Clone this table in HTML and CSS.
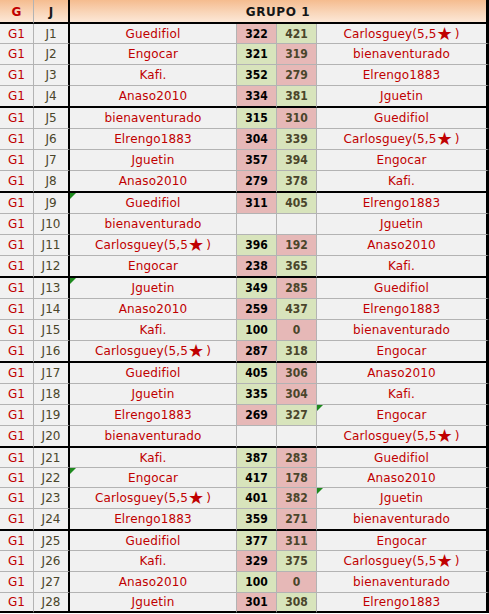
FILE: index.html
```html
<!DOCTYPE html>
<html>
<head>
<meta charset="utf-8">
<link rel="stylesheet" href="styles.css">
</head>
<body>
<div class="sheet">
  <div class="row head"><div class="c g">G</div><div class="c j">J</div><div class="c title">GRUPO 1</div></div>

  <div class="row s"><div class="c g">G1</div><div class="c j">J1</div><div class="c name">Guedifiol</div><div class="c sc lose">322</div><div class="c sc win">421</div><div class="c name away">Carlosguey(5,5<span class="star">★</span>)</div></div>
  <div class="row"><div class="c g">G1</div><div class="c j">J2</div><div class="c name">Engocar</div><div class="c sc win">321</div><div class="c sc lose">319</div><div class="c name away">bienaventurado</div></div>
  <div class="row"><div class="c g">G1</div><div class="c j">J3</div><div class="c name">Kafi.</div><div class="c sc win">352</div><div class="c sc lose">279</div><div class="c name away">Elrengo1883</div></div>
  <div class="row end"><div class="c g">G1</div><div class="c j">J4</div><div class="c name">Anaso2010</div><div class="c sc lose">334</div><div class="c sc win">381</div><div class="c name away">Jguetin</div></div>

  <div class="row"><div class="c g">G1</div><div class="c j">J5</div><div class="c name">bienaventurado</div><div class="c sc win">315</div><div class="c sc lose">310</div><div class="c name away">Guedifiol</div></div>
  <div class="row"><div class="c g">G1</div><div class="c j">J6</div><div class="c name">Elrengo1883</div><div class="c sc lose">304</div><div class="c sc win">339</div><div class="c name away">Carlosguey(5,5<span class="star">★</span>)</div></div>
  <div class="row"><div class="c g">G1</div><div class="c j">J7</div><div class="c name">Jguetin</div><div class="c sc lose">357</div><div class="c sc win">394</div><div class="c name away">Engocar</div></div>
  <div class="row end"><div class="c g">G1</div><div class="c j">J8</div><div class="c name">Anaso2010</div><div class="c sc lose">279</div><div class="c sc win">378</div><div class="c name away">Kafi.</div></div>

  <div class="row"><div class="c g">G1</div><div class="c j">J9</div><div class="c name flag">Guedifiol</div><div class="c sc lose">311</div><div class="c sc win">405</div><div class="c name away">Elrengo1883</div></div>
  <div class="row"><div class="c g">G1</div><div class="c j">J10</div><div class="c name">bienaventurado</div><div class="c sc"></div><div class="c sc"></div><div class="c name away">Jguetin</div></div>
  <div class="row"><div class="c g">G1</div><div class="c j">J11</div><div class="c name">Carlosguey(5,5<span class="star">★</span>)</div><div class="c sc win">396</div><div class="c sc lose">192</div><div class="c name away">Anaso2010</div></div>
  <div class="row end"><div class="c g">G1</div><div class="c j">J12</div><div class="c name">Engocar</div><div class="c sc lose">238</div><div class="c sc win">365</div><div class="c name away">Kafi.</div></div>

  <div class="row"><div class="c g">G1</div><div class="c j">J13</div><div class="c name flag">Jguetin</div><div class="c sc win">349</div><div class="c sc lose">285</div><div class="c name away">Guedifiol</div></div>
  <div class="row"><div class="c g">G1</div><div class="c j">J14</div><div class="c name">Anaso2010</div><div class="c sc lose">259</div><div class="c sc win">437</div><div class="c name away">Elrengo1883</div></div>
  <div class="row"><div class="c g">G1</div><div class="c j">J15</div><div class="c name">Kafi.</div><div class="c sc win">100</div><div class="c sc lose">0</div><div class="c name away">bienaventurado</div></div>
  <div class="row end"><div class="c g">G1</div><div class="c j">J16</div><div class="c name">Carlosguey(5,5<span class="star">★</span>)</div><div class="c sc lose">287</div><div class="c sc win">318</div><div class="c name away">Engocar</div></div>

  <div class="row"><div class="c g">G1</div><div class="c j">J17</div><div class="c name">Guedifiol</div><div class="c sc win">405</div><div class="c sc lose">306</div><div class="c name away">Anaso2010</div></div>
  <div class="row"><div class="c g">G1</div><div class="c j">J18</div><div class="c name">Jguetin</div><div class="c sc win">335</div><div class="c sc lose">304</div><div class="c name away">Kafi.</div></div>
  <div class="row"><div class="c g">G1</div><div class="c j">J19</div><div class="c name">Elrengo1883</div><div class="c sc lose">269</div><div class="c sc win">327</div><div class="c name away flag">Engocar</div></div>
  <div class="row end"><div class="c g">G1</div><div class="c j">J20</div><div class="c name">bienaventurado</div><div class="c sc"></div><div class="c sc"></div><div class="c name away">Carlosguey(5,5<span class="star">★</span>)</div></div>

  <div class="row s"><div class="c g">G1</div><div class="c j">J21</div><div class="c name">Kafi.</div><div class="c sc win">387</div><div class="c sc lose">283</div><div class="c name away">Guedifiol</div></div>
  <div class="row s"><div class="c g">G1</div><div class="c j">J22</div><div class="c name flag">Engocar</div><div class="c sc win">417</div><div class="c sc lose">178</div><div class="c name away">Anaso2010</div></div>
  <div class="row"><div class="c g">G1</div><div class="c j">J23</div><div class="c name">Carlosguey(5,5<span class="star">★</span>)</div><div class="c sc win">401</div><div class="c sc lose">382</div><div class="c name away flag">Jguetin</div></div>
  <div class="row end"><div class="c g">G1</div><div class="c j">J24</div><div class="c name">Elrengo1883</div><div class="c sc win">359</div><div class="c sc lose">271</div><div class="c name away">bienaventurado</div></div>

  <div class="row s"><div class="c g">G1</div><div class="c j">J25</div><div class="c name">Guedifiol</div><div class="c sc win">377</div><div class="c sc lose">311</div><div class="c name away">Engocar</div></div>
  <div class="row"><div class="c g">G1</div><div class="c j">J26</div><div class="c name">Kafi.</div><div class="c sc lose">329</div><div class="c sc win">375</div><div class="c name away">Carlosguey(5,5<span class="star">★</span>)</div></div>
  <div class="row"><div class="c g">G1</div><div class="c j">J27</div><div class="c name">Anaso2010</div><div class="c sc win">100</div><div class="c sc lose">0</div><div class="c name away">bienaventurado</div></div>
  <div class="row end s"><div class="c g">G1</div><div class="c j">J28</div><div class="c name">Jguetin</div><div class="c sc lose">301</div><div class="c sc win">308</div><div class="c name away">Elrengo1883</div></div>
</div>
</body>
</html>
```

FILE: styles.css
```css
html, body {
  margin: 0;
  padding: 0;
  background: #ffffff;
}

body {
  font-family: "DejaVu Sans", Verdana, sans-serif;
  font-size: 12px;
}

.sheet {
  width: 489px;
  background: #f1f1f1;
}

.row {
  display: grid;
  grid-template-columns: 34px 36px 167px 40px 40px 172px;
  height: 21px;
}

.row.s {
  height: 20px;
}

.row.end {
  height: 22px;
}

.row.end.s {
  height: 20px;
}

.c {
  box-sizing: border-box;
  border-right: 1px solid #b3b3b3;
  border-bottom: 1px solid #b3b3b3;
  display: flex;
  align-items: center;
  justify-content: center;
  white-space: nowrap;
  line-height: 1;
  position: relative;
}

.row.end .c {
  border-bottom: 2px solid #000;
}

.c.j {
  border-right: 2px solid #000;
  color: #4a452a;
}

.c.g {
  color: #c00000;
}

.c.name {
  color: #c00000;
  letter-spacing: 0.15px;
}

.c.away {
  border-right: 3px solid #000;
}

.star {
  font-size: 18px;
  line-height: 12px;
  height: 12px;
  display: inline-block;
  margin-right: 2px;
  letter-spacing: 0;
}

.c.sc {
  font-family: "DejaVu Sans Condensed", "DejaVu Sans", sans-serif;
  font-weight: bold;
  font-size: 12px;
  color: #000;
}

.c.sc + .c.sc {
  color: #4a452a;
}

.c.win {
  background: #d8e4bc;
}

.c.lose {
  background: #e6b8b7;
}

.flag::before {
  content: "";
  position: absolute;
  top: 0;
  left: 0;
  width: 0;
  height: 0;
  border-top: 6px solid #1e8a1e;
  border-right: 6px solid transparent;
}

/* header */
.row.head {
  height: 24px;
  background: linear-gradient(to bottom, #f5bc8f 0%, #f9d5b8 50%, #fdebdd 100%);
}

.row.head .c {
  border-bottom: 2px solid #000;
  font-weight: bold;
  font-size: 12px;
  padding-top: 1px;
}

.row.head .c.g {
  color: #c00000;
}

.row.head .c.j {
  color: #1a1a1a;
}

.row.head .title {
  grid-column: 3 / 7;
  border-right: 3px solid #000;
  color: #161616;
  letter-spacing: 0.6px;
}
```
